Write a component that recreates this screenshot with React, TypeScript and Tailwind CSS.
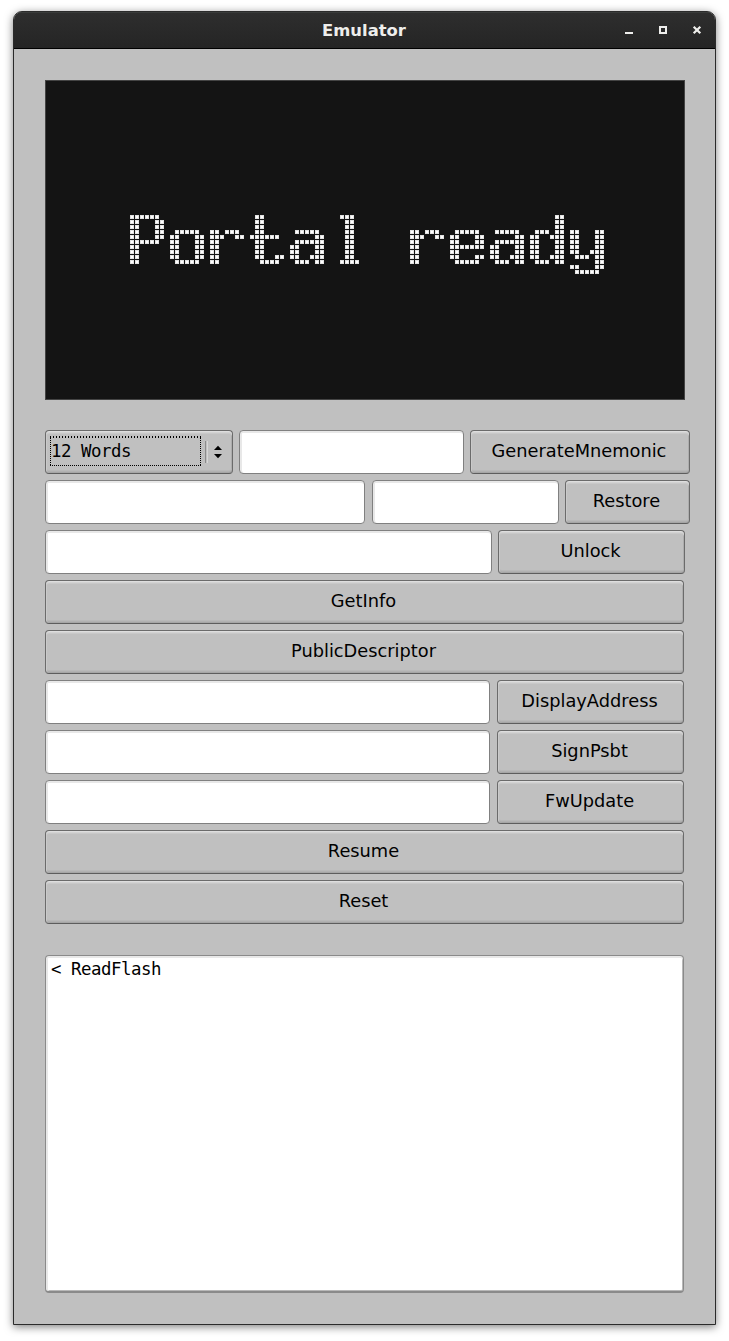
import type { ReactNode } from "react";

const GLYPHS: Record<string, string[]> = {
  P: ["######.", "##...##", "##...##", "##...##", "##...##", "######.", "##.....", "##.....", "##.....", "##....."],
  o: ["", "", "", ".#####.", "##...##", "##...##", "##...##", "##...##", "##...##", ".#####."],
  r: ["", "", "", "##.###.", "###..##", "##.....", "##.....", "##.....", "##.....", "##....."],
  t: [".##....", ".##....", ".##....", ".##....", "######.", ".##....", ".##....", ".##....", ".##..##", "..####."],
  a: ["", "", "", ".#####.", ".....##", ".######", "##...##", "##...##", "##..###", ".###.##"],
  l: ["..###..", "...##..", "...##..", "...##..", "...##..", "...##..", "...##..", "...##..", "...##..", "..####."],
  e: ["", "", "", ".#####.", "##...##", "##...##", "#######", "##.....", "##...##", ".#####."],
  d: [".....##", ".....##", ".....##", ".###.##", "##..###", "##...##", "##...##", "##...##", "##..###", ".###.##"],
  y: ["", "", "", "##...##", "##...##", "##...##", "##...##", "##..###", ".###.##", ".....##", "##...##", ".#####."],
};

function Display({ message }: { message: string }) {
  const dots: ReactNode[] = [];
  [...message].forEach((ch, i) => {
    (GLYPHS[ch] ?? []).forEach((row, y) => {
      [...row].forEach((c, x) => {
        if (c !== "#") return;
        const px = (17 + i * 8 + x) * 5;
        const py = (27 + y) * 5;
        dots.push(
          <g key={`${i}-${x}-${y}`}>
            <rect x={px} y={py} width="4" height="4" fill="#e2e2e2" />
            <rect x={px + 1} y={py + 1} width="2" height="2" fill="#ffffff" />
          </g>
        );
      });
    });
  });
  return (
    <div className="h-[320px] w-[640px] bg-[#141414]">
      <svg width="640" height="320" viewBox="0 0 640 320" role="img" aria-label={message} shapeRendering="crispEdges">
        {dots}
        <rect x="0.5" y="0.5" width="639" height="319" fill="none" stroke="#444444" />
      </svg>
    </div>
  );
}

function Button({ width, children }: { width: string; children: ReactNode }) {
  return (
    <button
      className={`${width} h-11 shrink-0 rounded-[4px] border border-[#6b6b6b] border-b-[#5c5c5c] bg-[#c0c0c0] pb-[3px] pr-[2px] text-center text-[17.8px] leading-none text-black shadow-[inset_0_1px_0_#dedede,inset_0_2px_0_#d2d2d2,inset_0_3px_0_#c8c8c8,inset_1px_0_0_#cacaca,inset_0_-1px_0_#a5a5a5,inset_0_-2px_0_#b0b0b0,inset_0_-3px_0_#b8b8b8,inset_-1px_0_0_#adadad]`}
    >
      {children}
    </button>
  );
}

function Input({ width }: { width: string }) {
  return (
    <input
      className={`${width} h-11 shrink-0 rounded-[4px] border border-[#808080] bg-white px-1 font-['DejaVu_Sans_Mono',monospace] text-[17.4px] shadow-[inset_0_2px_0_#e8e8e8,inset_2px_0_0_#e8e8e8] outline-none`}
    />
  );
}

function WordCount() {
  return (
    <div className="flex h-11 w-[188px] shrink-0 items-center rounded-[4px] border border-[#6b6b6b] border-b-[#5c5c5c] bg-[#c0c0c0] pl-1 shadow-[inset_0_1px_0_#dedede,inset_0_2px_0_#d2d2d2,inset_0_3px_0_#c8c8c8,inset_1px_0_0_#cacaca,inset_0_-1px_0_#a5a5a5,inset_0_-2px_0_#b0b0b0,inset_0_-3px_0_#b8b8b8,inset_-1px_0_0_#adadad]">
      <div className="relative mb-[2px] flex h-[30px] w-[151px] items-center pl-[1px] pt-[2px] font-['DejaVu_Sans_Mono',monospace] text-[17.4px] leading-none tracking-[-0.48px]">
        12 Words
        <svg className="absolute inset-0" width="151" height="30" shapeRendering="crispEdges" fill="none" stroke="#000">
          <path d="M0 1H151" strokeWidth="2" strokeDasharray="1 2" />
          <path d="M0 29.5H151M0.5 0V30M150.5 0V30" strokeDasharray="1 1" />
        </svg>
      </div>
      <div className="ml-[4px] h-[22px] w-[3px] border-l border-r border-l-[#8c8c8c] border-r-[#d8d8d8]" />
      <svg className="ml-[5px]" width="10" height="14" viewBox="0 0 10 14">
        <path d="M1 5L5 0.7L9 5ZM1 9L5 13.3L9 9Z" fill="#000" />
      </svg>
    </div>
  );
}

function Row({ children }: { children: ReactNode }) {
  return <div className="flex">{children}</div>;
}

export default function App() {
  return (
    <div className="h-[1341px] w-[729px] overflow-hidden bg-white pl-[13px] pt-[11px] font-['DejaVu_Sans',sans-serif] text-black">
      <div className="flex h-[1314px] w-[703px] flex-col overflow-hidden rounded-t-[9px] border border-[#2b2b2b] bg-[#c0c0c0] shadow-[0_2px_8px_rgba(0,0,0,0.5)]">
        <header className="flex h-[37px] shrink-0 items-center border-b border-black bg-linear-to-b from-[#2e2e2e] to-[#252525] pr-[12px] shadow-[inset_0_1px_0_#3a3c3b]">
          <h1 className="w-full pl-[89px] pt-[2px] text-center text-[16.4px] font-bold leading-none text-[#eeeeec]">Emulator</h1>
          <svg className="shrink-0" width="78" height="10" viewBox="0 0 78 10" shapeRendering="crispEdges" fill="#eeeeec">
            <rect x="0" y="7" width="8" height="2" />
            <path fillRule="evenodd" d="M34 1h8v8h-8zM36 3v4h4v-4z" />
            <path shapeRendering="auto" d="M68.7 1.7L75.3 8.3M75.3 1.7L68.7 8.3" stroke="#eeeeec" strokeWidth="2.2" />
          </svg>
        </header>
        <main className="flex flex-col pl-[31px] pt-[31px]">
          <Display message="Portal ready" />
          <section className="flex flex-col gap-[6px] pt-[30px]">
            <div className="flex gap-[6px]">
              <WordCount />
              <Input width="w-[225px]" />
              <Button width="w-[220px]">GenerateMnemonic</Button>
            </div>
            <div className="flex">
              <Input width="mr-[7px] w-[320px]" />
              <Input width="mr-[6px] w-[187px]" />
              <Button width="w-[125px]">Restore</Button>
            </div>
            <div className="flex gap-[6px]">
              <Input width="w-[447px]" />
              <Button width="w-[187px]">Unlock</Button>
            </div>
            <Row><Button width="w-[639px]">GetInfo</Button></Row>
            <Row><Button width="w-[639px]">PublicDescriptor</Button></Row>
            {["DisplayAddress", "SignPsbt", "FwUpdate"].map((name) => (
              <div key={name} className="flex gap-[7px]">
                <Input width="w-[445px]" />
                <Button width="w-[187px]">{name}</Button>
              </div>
            ))}
            <Row><Button width="w-[639px]">Resume</Button></Row>
            <Row><Button width="w-[639px]">Reset</Button></Row>
          </section>
          <div className="mt-[31px] h-[338px] w-[639px] rounded-[4px] border border-b-2 border-[#8a8a8a] bg-white pl-[5px] pt-[4px] font-['DejaVu_Sans_Mono',monospace] text-[17.4px] leading-[19px] tracking-[-0.48px] shadow-[inset_0_2px_0_#e8e8e8,inset_2px_0_0_#e8e8e8,inset_-1px_0_0_#b8b8b8,inset_0_-1px_0_#b8b8b8]">
            &lt; ReadFlash
          </div>
        </main>
      </div>
    </div>
  );
}
